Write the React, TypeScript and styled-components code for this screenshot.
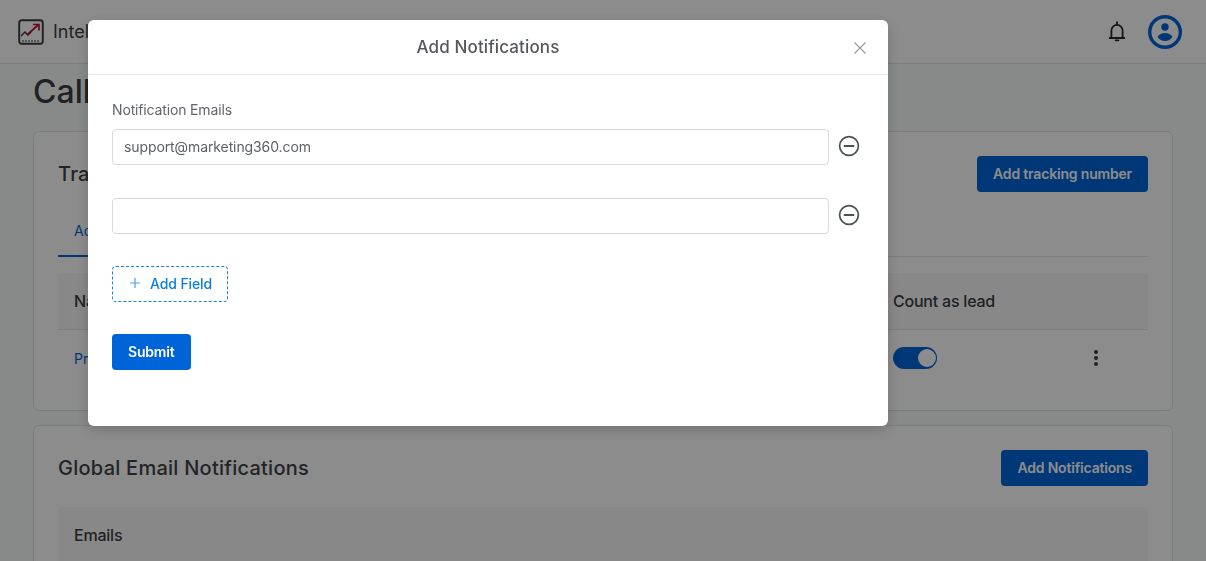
import React from "react";
import styled, { createGlobalStyle } from "styled-components";

const GlobalStyle = createGlobalStyle`
  html, body {
    margin: 0;
    padding: 0;
    height: 100%;
    overflow: hidden;
    background: #f8faf9;
    font-family: Inter, "Liberation Sans", sans-serif;
    color: #3b4046;
  }
  * { box-sizing: border-box; }
`;

const Page = styled.div`
  height: 561px;
  overflow: hidden;
`;
const TopBar = styled.header`
  height: 64px;
  padding: 0 23px 0 18px;
  display: flex;
  align-items: center;
  background: #fff;
  border-bottom: 1px solid #e2e4e6;
`;
const Brand = styled.div`
  display: flex;
  align-items: center;
  gap: 9px;
  font-size: 18px;
  flex: 1;
`;
const TopIcons = styled.div`
  display: flex;
  align-items: center;
  gap: 21px;
`;
const Content = styled.main`
  padding: 8px 33px 0;
`;
const PageTitle = styled.h1`
  margin: 0 0 19px;
  height: 40px;
  line-height: 40px;
  font-size: 32px;
  font-weight: 500;
  color: #3a3d42;
`;
const Card = styled.section`
  height: ${(props: { $height: number }) => props.$height}px;
  margin-bottom: 14px;
  padding: 24px 24px 0;
  background: #fff;
  border: 1px solid #e0e2e4;
  border-radius: 6px;
`;
const CardHead = styled.div`
  display: flex;
  align-items: center;
  justify-content: space-between;
  height: 36px;
`;
const CardTitle = styled.h2`
  margin: 0;
  font-size: 20px;
  font-weight: 500;
  letter-spacing: 0.25px;
  color: #3f4347;
`;
const PrimaryButton = styled.button`
  height: 36px;
  padding: 0 16px 2px;
  border: 0;
  border-radius: 4px;
  background: #0064d9;
  color: #fff;
  font-family: inherit;
  font-size: 14px;
  font-weight: 600;
  letter-spacing: -0.18px;
`;
const Tabs = styled.div`
  margin-top: 24px;
  height: 41px;
  border-bottom: 1px solid #e4e6e8;
  display: flex;
`;
const Tab = styled.div`
  height: 41px;
  padding: 6px 16px 0;
  font-size: 14px;
  color: #0064d9;
  border-bottom: 2px solid #0064d9;
`;
const TableHead = styled.div`
  margin-top: ${(props: { $top: number }) => props.$top}px;
  height: 57px;
  padding: 0 16px;
  display: grid;
  grid-template-columns: 819px 1fr;
  align-items: center;
  background: #f8f8f8;
  border-bottom: 1px solid #e4e6e8;
  border-radius: 4px 4px 0 0;
  font-size: 16px;
  font-weight: 500;
  letter-spacing: -0.22px;
  color: #3a3d42;
`;
const TableRow = styled.div`
  height: 56px;
  padding: 0 16px;
  display: grid;
  grid-template-columns: 819px 44px 1fr;
  align-items: center;
  font-size: 14px;
`;
const RowLink = styled.a`
  color: #0064d9;
`;
const Switch = styled.span`
  position: relative;
  display: block;
  width: 44px;
  height: 22px;
  border-radius: 11px;
  background: #0064d9;
  &::after {
    content: "";
    position: absolute;
    top: 2px;
    right: 1px;
    width: 18px;
    height: 18px;
    border-radius: 50%;
    background: #fff;
  }
`;
const Kebab = styled.div`
  justify-self: end;
  margin-right: 34px;
  display: flex;
  flex-direction: column;
  gap: 2px;
`;
const Dot = styled.i`
  display: block;
  width: 4px;
  height: 4px;
  border-radius: 50%;
  background: #3a3d42;
`;

const Overlay = styled.div`
  position: fixed;
  inset: 0;
  background: rgba(0, 0, 0, 0.45);
`;
const Modal = styled.div`
  position: fixed;
  top: 20px;
  left: 88px;
  width: 800px;
  height: 406px;
  background: #fff;
  border-radius: 6px;
  box-shadow: 0 4px 14px rgba(0, 0, 0, 0.18);
`;
const ModalHead = styled.div`
  position: relative;
  height: 55px;
  display: flex;
  align-items: center;
  justify-content: center;
  border-bottom: 1px solid #e8e8e8;
  font-size: 17px;
  font-weight: 500;
  letter-spacing: 0.12px;
  color: #55585c;
`;
const CloseIcon = styled.svg`
  position: absolute;
  top: 22px;
  right: 22px;
`;
const ModalBody = styled.form`
  padding: 26px 24px 0;
`;
const FieldLabel = styled.label`
  display: block;
  height: 28px;
  line-height: 18px;
  font-size: 14px;
  letter-spacing: -0.15px;
  color: #62666b;
`;
const FieldRow = styled.div`
  display: flex;
  align-items: center;
  gap: 9px;
  margin-bottom: 33px;
`;
const TextInput = styled.input`
  width: 717px;
  height: 36px;
  padding: 0 11px 2px;
  border: 1px solid #d9dadc;
  border-radius: 4px;
  outline: 0;
  font-family: inherit;
  font-size: 14px;
  letter-spacing: -0.1px;
  color: #5d6166;
`;
const RemoveIcon = styled.svg`
  margin-top: -2px;
`;
const AddField = styled.button`
  display: flex;
  align-items: center;
  gap: 10px;
  width: 116px;
  height: 36px;
  margin: -1px 0 32px;
  padding: 0 0 2px 17px;
  background: #fff;
  border: 1px dashed #0f86e0;
  border-radius: 4px;
  color: #0b7fdc;
  font-family: inherit;
  font-size: 14px;
  font-weight: 500;
  letter-spacing: -0.12px;
`;

const LogoIcon = () => (
  <svg width="26" height="26" viewBox="0 0 26 26" fill="none">
    <rect x="1.2" y="1.2" width="23.6" height="23.6" rx="2.5" stroke="#3a3d42" strokeWidth="1.9" />
    <path d="M3 17l4-4 3 3 3-3" stroke="#3a3d42" strokeWidth="1.5" />
    <path d="M9 16l11-10M15 5.5h6v6" stroke="#c8102e" strokeWidth="1.7" />
    <path d="M5 21v2M8 21v2M11 21v2M14 21v2M17 21v2M20 21v2" stroke="#3a3d42" strokeWidth="1" />
  </svg>
);

const BellIcon = () => (
  <svg width="18" height="21" viewBox="0 0 18 21" fill="none" stroke="#24272b" strokeWidth="1.8">
    <path d="M1 17h16M3.4 17v-7.5a5.6 5.600 0 0 1 11.200 0V17" />
    <path d="M9 1.200v2.500" strokeLinecap="round" />
    <path d="M7.600 19.300h2.800" strokeLinecap="round" />
  </svg>
);

const UserIcon = () => (
  <svg width="36" height="36" viewBox="0 0 36 36">
    <circle cx="18" cy="18" r="15.3" fill="none" stroke="#0064d9" strokeWidth="3.4" />
    <circle cx="18" cy="13" r="3.7" fill="#0064d9" />
    <path d="M10.500 23c1.800-3 4.500-4 7.500-4s5.700 1 7.500 4c-1.800 2.500-4.500 4-7.500 4s-5.700-1.500-7.500-4z" fill="#0064d9" />
  </svg>
);

const MinusIcon = () => (
  <RemoveIcon width="22" height="22" viewBox="0 0 22 22" fill="none" stroke="#4a5158" strokeWidth="1.7">
    <circle cx="11" cy="11" r="9.400" />
    <path d="M5.800 11h10.400" strokeWidth="2" />
  </RemoveIcon>
);

const App: React.FC = () => {
  return (
    <Page>
      <GlobalStyle />
      <TopBar>
        <Brand>
          <LogoIcon />
          Intelligence
        </Brand>
        <TopIcons>
          <BellIcon />
          <UserIcon />
        </TopIcons>
      </TopBar>
      <Content>
        <PageTitle>Call Tracking</PageTitle>
        <Card $height={280}>
          <CardHead>
            <CardTitle>Tracking Numbers</CardTitle>
            <PrimaryButton>Add tracking number</PrimaryButton>
          </CardHead>
          <Tabs>
            <Tab>Active</Tab>
          </Tabs>
          <TableHead $top={16}>
            <span>Name</span>
            <span>Count as lead</span>
          </TableHead>
          <TableRow>
            <RowLink>Primary</RowLink>
            <Switch />
            <Kebab>
              <Dot />
              <Dot />
              <Dot />
            </Kebab>
          </TableRow>
        </Card>
        <Card $height={200}>
          <CardHead>
            <CardTitle>Global Email Notifications</CardTitle>
            <PrimaryButton>Add Notifications</PrimaryButton>
          </CardHead>
          <TableHead $top={21}>
            <span>Emails</span>
          </TableHead>
        </Card>
      </Content>
      <Overlay />
      <Modal>
        <ModalHead>
          Add Notifications
          <CloseIcon width="12" height="12" viewBox="0 0 12 12" fill="none" stroke="#999" strokeWidth="1.1">
            <path d="M0.500 0.500l11 11M11.500 0.500l-11 11" />
          </CloseIcon>
        </ModalHead>
        <ModalBody>
          <FieldLabel>Notification Emails</FieldLabel>
          <FieldRow>
            <TextInput defaultValue="support@marketing360.com" />
            <MinusIcon />
          </FieldRow>
          <FieldRow>
            <TextInput />
            <MinusIcon />
          </FieldRow>
          <AddField type="button">
            <svg width="10" height="10" viewBox="0 0 10 10" stroke="#4ba3ea" strokeWidth="1.200">
              <path d="M5 0v10M0 5h10" />
            </svg>
            Add Field
          </AddField>
          <PrimaryButton type="button">Submit</PrimaryButton>
        </ModalBody>
      </Modal>
    </Page>
  );
};

export default App;
